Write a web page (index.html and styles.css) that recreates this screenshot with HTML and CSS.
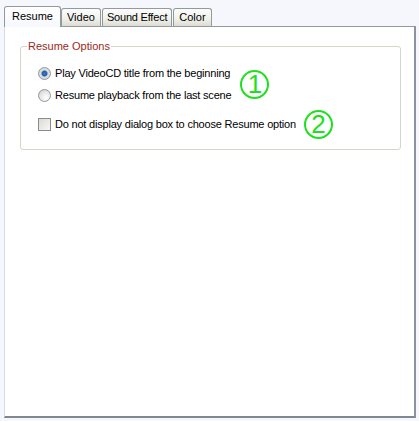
FILE: index.html
```html
<!DOCTYPE html>
<html>
<head>
<meta charset="utf-8">
<link rel="stylesheet" href="styles.css">
</head>
<body>
<div class="window">
  <div class="tabs">
    <div class="tab active">Resume</div>
    <div class="tab">Video</div>
    <div class="tab tab-sound">Sound Effect</div>
    <div class="tab">Color</div>
  </div>
  <div class="panel">
    <fieldset class="group">
      <legend class="legend">Resume Options</legend>
      <div class="radios">
        <div class="radio-col">
          <label class="row"><input type="radio" name="r" class="radio" checked><span>Play VideoCD title from the beginning</span></label>
          <label class="row"><input type="radio" name="r" class="radio"><span>Resume playback from the last scene</span></label>
        </div>
        <span class="mark mark1">1</span>
      </div>
      <label class="row check-row"><input type="checkbox" class="check"><span>Do not display dialog box to choose Resume option</span><span class="mark mark2">2</span></label>
    </fieldset>
  </div>
</div>
</body>
</html>
```
FILE: styles.css
```css
html, body {
  margin: 0;
  padding: 0;
}
body {
  background: #f5f7fc;
  font-family: "Liberation Sans", Arial, sans-serif;
  font-size: 11px;
  color: #000;
}
.window {
  width: 419px;
  height: 421px;
  box-sizing: border-box;
  padding: 6px 3px 3px 4px;
  display: flex;
  flex-direction: column;
}
.tabs {
  display: flex;
  align-items: flex-end;
  height: 20px;
  flex: none;
}
.tab {
  height: 18px;
  box-sizing: border-box;
  border: 1px solid #919b9c;
  border-bottom: none;
  border-radius: 3px 3px 0 0;
  padding: 0 5px;
  line-height: 17px;
  background: linear-gradient(#fcfcfe, #f0f0ea 60%, #dcdcd4);
  margin-left: 1px;
}
.tab.active {
  height: 21px;
  margin-left: 0;
  margin-bottom: -1px;
  padding: 0 7px;
  line-height: 18px;
  background: linear-gradient(#ffffff, #f7f8fd);
  position: relative;
  z-index: 1;
}
.tab.active + .tab {
  margin-left: 0;
}
.tab-sound {
  padding: 0 4px;
  letter-spacing: -0.2px;
}
.panel {
  flex: 1;
  background: #fff;
  border: 1px solid #919b9c;
  border-left-color: #d6dbe6;
  border-right-color: #8a939e;
  border-bottom-color: #7f8790;
  border-right-width: 2px;
  border-bottom-width: 2px;
  padding: 12px 13px 0 15px;
}
.group {
  margin: 0;
  padding: 13px 0 0 17px;
  border: 1px solid #d5d5c8;
  border-radius: 3px;
  height: 111px;
  box-sizing: border-box;
}
.legend {
  color: #9a2a18;
  padding: 0 1px;
  margin-left: -11px;
  line-height: 14px;
}
.radios {
  display: flex;
  align-items: center;
}
.radio-col {
  display: flex;
  flex-direction: column;
  gap: 8px;
}
.row {
  display: flex;
  align-items: center;
  gap: 4px;
  height: 14px;
  white-space: nowrap;
  letter-spacing: -0.2px;
}
.radio {
  appearance: none;
  -webkit-appearance: none;
  margin: 0;
  width: 13px;
  height: 13px;
  border-radius: 50%;
  border: 1px solid #8d99a6;
  box-sizing: border-box;
  background: radial-gradient(circle at 65% 70%, #ffffff 0%, #e6e6e0 55%, #c8c8c0 100%);
}
.radio:checked {
  background: radial-gradient(circle at 50% 50%, #3b7fd2 0%, #1d5ab0 28%, #6c93c6 36%, #e2e2dc 48%, #cacac2 100%);
}
.check-row {
  margin-top: 8px;
  height: 28px;
}
.check {
  appearance: none;
  -webkit-appearance: none;
  margin: 0;
  width: 13px;
  height: 13px;
  border: 1px solid #8c8c8c;
  box-sizing: border-box;
  background: linear-gradient(135deg, #dcdcd6, #f6f6f3);
}
.mark {
  width: 25px;
  height: 25px;
  border: 2px solid #1ee01e;
  border-radius: 50%;
  color: #1ee01e;
  font-family: "Liberation Sans", Arial, sans-serif;
  font-size: 26px;
  line-height: 25px;
  text-align: center;
  letter-spacing: 0;
  flex: none;
}
.mark1 {
  margin-left: 9px;
  margin-top: 1px;
}
.mark2 {
  margin-left: 4px;
}
```
